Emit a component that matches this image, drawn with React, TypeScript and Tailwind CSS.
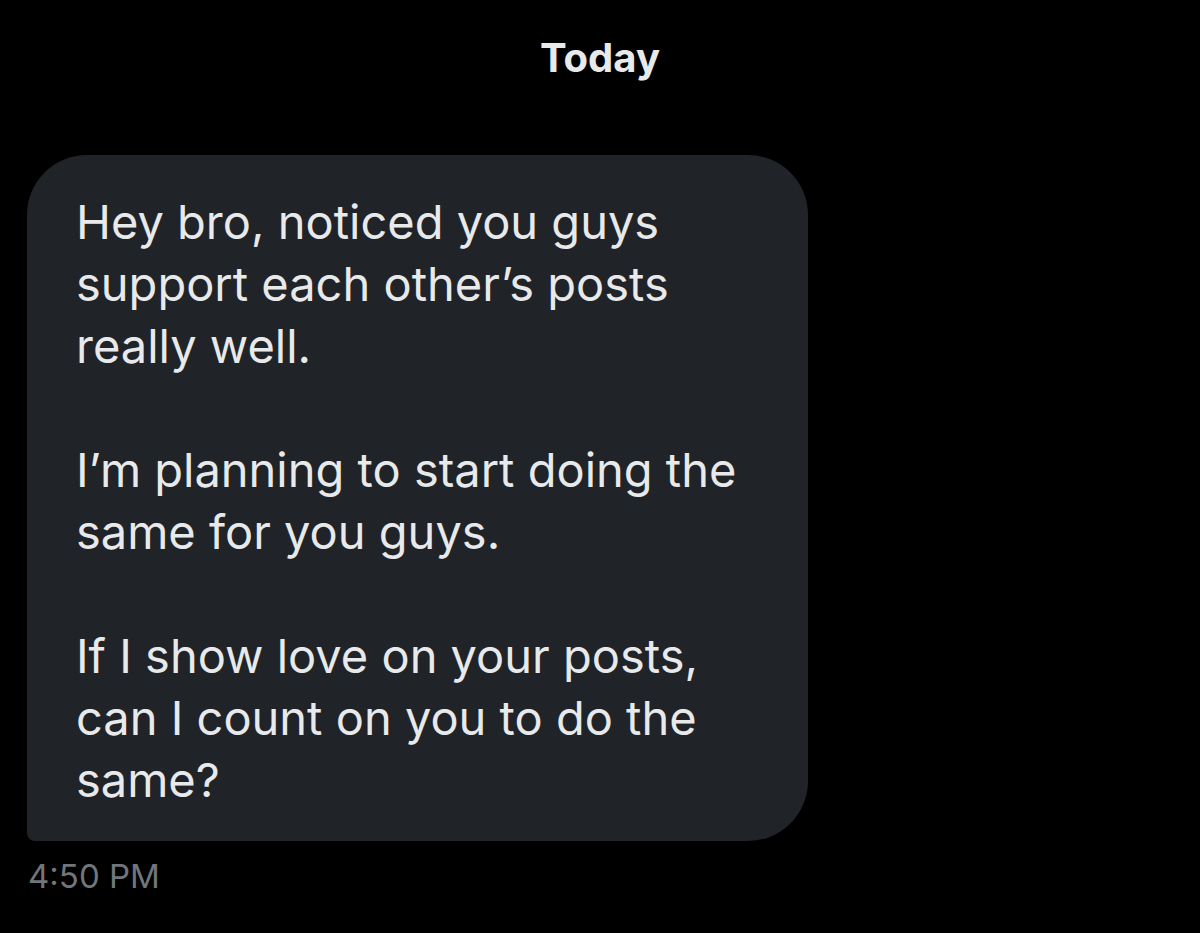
import React from "react";

const lines = [
  "Hey bro, noticed you guys",
  "support each other’s posts",
  "really well.",
  "",
  "I’m planning to start doing the",
  "same for you guys.",
  "",
  "If I show love on your posts,",
  "can I count on you to do the",
  "same?",
];

export default function App() {
  return (
    <div className="min-h-screen w-full bg-black text-[#e7e9ea]" style={{ fontFamily: "Inter, 'Noto Sans', sans-serif" }}>
      <div className="pt-[32px] flex justify-center">
        <p className="text-[40px] font-bold leading-[52px] text-[#e7e9ea]">Today</p>
      </div>
      <div className="pt-[71px] pl-[27px]">
        <div className="w-[781px] bg-[#202327] rounded-[60px] rounded-bl-[8px] pl-[49px] pr-[30px] pt-[36px] pb-[30px]">
          {lines.map((l, i) => (
            <p key={i} className="text-[47px] leading-[62px] h-[62px] whitespace-nowrap">
              {l}
            </p>
          ))}
        </div>
        <p className="pt-[15px] pl-[1px] text-[33px] leading-[40px] text-[#71767b]">4:50 PM</p>
      </div>
    </div>
  );
}
